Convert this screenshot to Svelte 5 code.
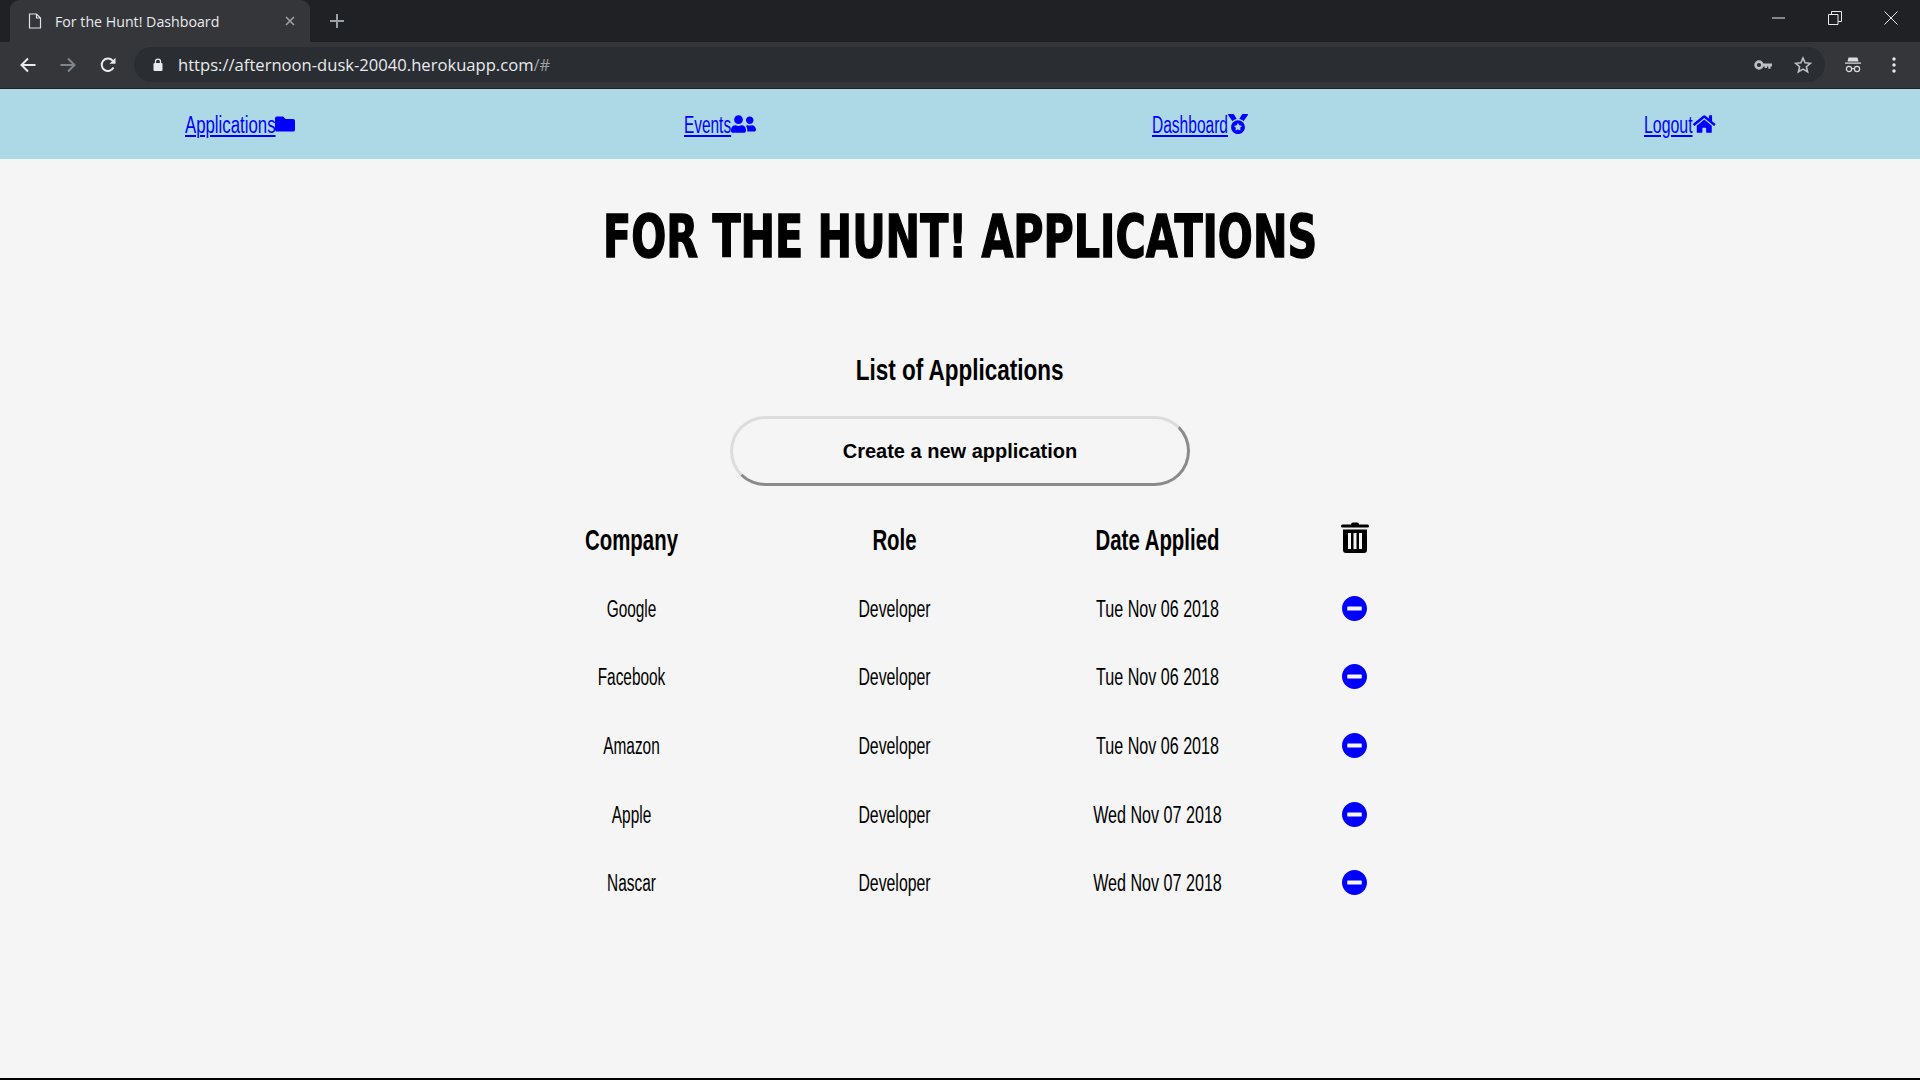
<script>
  const navLinks = [
    { label: 'Applications', icon: 'folder', width: 90, squeeze: 0.73 },
    { label: 'Events', icon: 'friends', width: 47, squeeze: 0.67 },
    { label: 'Dashboard', icon: 'medal', width: 76, squeeze: 0.675 },
    { label: 'Logout', icon: 'home', width: 49, squeeze: 0.69 }
  ];

  const applications = [
    { company: 'Google', role: 'Developer', date: 'Tue Nov 06 2018' },
    { company: 'Facebook', role: 'Developer', date: 'Tue Nov 06 2018' },
    { company: 'Amazon', role: 'Developer', date: 'Tue Nov 06 2018' },
    { company: 'Apple', role: 'Developer', date: 'Wed Nov 07 2018' },
    { company: 'Nascar', role: 'Developer', date: 'Wed Nov 07 2018' }
  ];

  const icons = {
    folder: { box: '0 0 512 512', d: 'M464 128H272l-64-64H48C21.49 64 0 85.49 0 112v288c0 26.51 21.49 48 48 48h416c26.51 0 48-21.49 48-48V176c0-26.51-21.49-48-48-48z' },
    friends: { box: '0 0 640 512', d: 'M192 256c61.9 0 112-50.1 112-112S253.9 32 192 32 80 82.1 80 144s50.1 112 112 112zm76.8 32h-8.3c-20.8 10-43.9 16-68.5 16s-47.6-6-68.5-16h-8.3C51.6 288 0 339.6 0 403.2V432c0 26.5 21.5 48 48 48h288c26.5 0 48-21.5 48-48v-28.8c0-63.6-51.6-115.2-115.2-115.2zM480 256c53 0 96-43 96-96s-43-96-96-96-96 43-96 96 43 96 96 96zm48 32h-3.8c-13.9 4.8-28.6 8-44.2 8s-30.3-3.2-44.2-8H432c-20.4 0-39.2 5.9-55.7 15.4 24.4 26.3 39.7 61.2 39.7 99.8v38.4c0 2.2-.5 4.3-.6 6.4H592c26.5 0 48-21.5 48-48 0-61.9-50.1-112-112-112z' },
    medal: { box: '0 0 512 512', d: 'M223.75 130.75L154.62 15.54A31.997 31.997 0 0 0 127.18 0H16.03C3.08 0-4.5 14.57 2.92 25.18l111.27 158.96c29.72-27.77 67.52-46.83 109.56-53.39zM495.97 0H384.82c-11.24 0-21.66 5.9-27.44 15.54l-69.13 115.21c42.04 6.56 79.84 25.62 109.56 53.38L509.08 25.18C516.5 14.57 508.92 0 495.97 0zM256 160c-97.2 0-176 78.8-176 176s78.8 176 176 176 176-78.8 176-176-78.8-176-176-176zm92.52 157.26l-37.93 36.96 8.97 52.22c1.6 9.36-8.26 16.51-16.65 12.09L256 393.88l-46.9 24.65c-8.4 4.45-18.25-2.74-16.65-12.09l8.97-52.22-37.93-36.96c-6.82-6.64-3.05-18.23 6.35-19.59l52.43-7.64 23.43-47.52c2.11-4.28 6.19-6.39 10.28-6.39 4.11 0 8.22 2.14 10.33 6.39l23.43 47.52 52.43 7.64c9.4 1.36 13.17 12.95 6.35 19.59z' },
    home: { box: '0 0 576 512', d: 'M280.37 148.26L96 300.11V464a16 16 0 0 0 16 16l112.06-.29a16 16 0 0 0 15.92-16V368a16 16 0 0 1 16-16h64a16 16 0 0 1 16 16v95.64a16 16 0 0 0 16 16.05L464 480a16 16 0 0 0 16-16V300L295.67 148.26a12.19 12.19 0 0 0-15.3 0zM571.6 251.47L488 182.56V44.05a12 12 0 0 0-12-12h-56a12 12 0 0 0-12 12v72.61L318.47 43a48 48 0 0 0-61 0L4.34 251.47a12 12 0 0 0-1.6 16.9l25.5 31A12 12 0 0 0 45.15 301l235.22-193.74a12.19 12.19 0 0 1 15.3 0L530.9 301a12 12 0 0 0 16.9-1.6l25.5-31a12 12 0 0 0-1.7-16.93z' }
  };
</script>

<div class="browser">
  <div class="tabstrip">
    <div class="tab">
      <svg class="favicon" viewBox="0 0 14 16" width="14" height="16">
        <path d="M1.5 1h7l4 4v10h-11zM8.5 1v4h4" fill="none" stroke="#dee1e6" stroke-width="1.2" />
      </svg>
      <span class="tab-title">For the Hunt! Dashboard</span>
      <svg class="tab-close" viewBox="0 0 10 10" width="10" height="10">
        <path d="M1 1l8 8M9 1l-8 8" stroke="#9aa0a6" stroke-width="1.6" />
      </svg>
    </div>
    <svg class="new-tab" viewBox="0 0 14 14" width="14" height="14">
      <path d="M7 0v14M0 7h14" stroke="#9aa0a6" stroke-width="2" />
    </svg>
    <div class="window-btns">
      <svg viewBox="0 0 14 14" width="14" height="14"><path d="M0 7h13" stroke="#e8eaed" stroke-width="1" /></svg>
      <svg viewBox="0 0 14 14" width="14" height="14"><path d="M.5 3.5h9.5v10H.5zM3.5 3.5V.5h10v10H10" fill="none" stroke="#e8eaed" stroke-width="1" /></svg>
      <svg viewBox="0 0 14 14" width="14" height="14"><path d="M.5.5l13 13M13.5.5l-13 13" stroke="#e8eaed" stroke-width="1" /></svg>
    </div>
  </div>

  <div class="toolbar">
    <svg class="tool" viewBox="0 0 16 16" width="16" height="16">
      <path d="M15.5 8H2M8 1.5L1.5 8 8 14.5" fill="none" stroke="#e8eaed" stroke-width="2" />
    </svg>
    <svg class="tool" viewBox="0 0 16 16" width="16" height="16">
      <path d="M.5 8H14M8 1.5L14.5 8 8 14.5" fill="none" stroke="#80868b" stroke-width="2" />
    </svg>
    <svg class="tool" viewBox="0 0 16 16" width="16" height="16">
      <path d="M13.5 10.5A6.2 6.2 0 1 1 12.6 3.6L14 5" fill="none" stroke="#e8eaed" stroke-width="2" />
      <path d="M15.5 .8v6h-6z" fill="#e8eaed" />
    </svg>
    <div class="omnibox">
      <svg class="lock" viewBox="0 0 10 13" width="10" height="13">
        <path d="M2.5 5.500V3.600a2.500 2.500 0 0 1 5 0v1.900" fill="none" stroke="#e8eaed" stroke-width="1.300" />
        <rect x="0.5" y="5" width="9" height="8" rx="1" fill="#e8eaed" />
      </svg>
      <span class="url">https://afternoon-dusk-20040.herokuapp.com<span class="url-dim">/#</span></span>
      <svg class="key" viewBox="0 0 18 10" width="18" height="10">
        <circle cx="5" cy="5" r="3.400" fill="none" stroke="#bdc1c6" stroke-width="2.600" />
        <path d="M8 3.600h10v2.800h-1.500v2.400h-2.200V6.400h-1.400v1.600h-2.200V6.400H8z" fill="#bdc1c6" />
      </svg>
      <svg class="star" viewBox="0 0 18 18" width="18" height="18">
        <path d="M9 2l2.100 4.800 5.200.5-3.900 3.400 1.200 5.100L9 13.100l-4.600 2.700 1.200-5.100-3.900-3.400 5.200-.5z" fill="none" stroke="#bdc1c6" stroke-width="1.600" />
      </svg>
    </div>
    <svg class="incognito" viewBox="0 0 18 18" width="18" height="18">
      <path d="M4.500 1.500h9l1 4h-11zM1 6.500h16v1.200H1z" fill="#dadce0" />
      <circle cx="5" cy="13" r="2.600" fill="none" stroke="#dadce0" stroke-width="1.200" />
      <circle cx="13" cy="13" r="2.600" fill="none" stroke="#dadce0" stroke-width="1.200" />
      <path d="M7.600 12.600h2.800" stroke="#dadce0" stroke-width="1.200" />
    </svg>
    <svg class="dots" viewBox="0 0 4 16" width="4" height="16">
      <circle cx="2" cy="2" r="1.700" fill="#e8eaed" />
      <circle cx="2" cy="8" r="1.700" fill="#e8eaed" />
      <circle cx="2" cy="14" r="1.700" fill="#e8eaed" />
    </svg>
  </div>
</div>

<nav class="nav">
  {#each navLinks as link}
    <div class="nav-item">
      <span class="nav-label" style="width: {link.width}px">
        <a href="#top" style="transform: scaleX({link.squeeze})">{link.label}</a>
      </span>
      <svg class="nav-icon" viewBox={icons[link.icon].box} fill="#0000ff">
        <path d={icons[link.icon].d} />
      </svg>
    </div>
  {/each}
</nav>

<main class="page">
  <h1 class="title">For the Hunt! Applications</h1>
  <h2 class="subtitle">List of Applications</h2>
  <button class="create-btn">Create a new application</button>

  <div class="table">
    <div class="head head-text">Company</div>
    <div class="head head-text">Role</div>
    <div class="head head-text">Date Applied</div>
    <div class="head trash-cell">
      <svg class="trash" viewBox="0 0 28 32" width="28" height="32">
        <path d="M10 3.500a2 2 0 0 1 2-2h4a2 2 0 0 1 2 2h8.500a1.500 1.500 0 0 1 0 3h-25a1.500 1.500 0 0 1 0-3z" />
        <path fill-rule="evenodd" d="M2 8.500h24V29a3 3 0 0 1-3 3H5a3 3 0 0 1-3-3zM7 12v16h3V12zM12.500 12v16h3V12zM18 12v16h3V12z" />
      </svg>
    </div>
    {#each applications as app}
      <div class="cell company">{app.company}</div>
      <div class="cell role">{app.role}</div>
      <div class="cell date">{app.date}</div>
      <div class="remove-cell">
        <svg class="remove" viewBox="8 8 496 496" width="25" height="25" fill="#0000ff">
          <path d="M256 8C119 8 8 119 8 256s111 248 248 248 248-111 248-248S393 8 256 8zM124 296c-6.600 0-12-5.400-12-12v-56c0-6.600 5.400-12 12-12h264c6.600 0 12 5.400 12 12v56c0 6.600-5.400 12-12 12H124z" />
        </svg>
      </div>
    {/each}
  </div>
</main>

<style>
  :global(body) {
    margin: 0;
    background: #f5f5f5;
  }

  .browser {
    background: #35363a;
    font-family: "Open Sans", "Noto Sans", sans-serif;
  }

  .tabstrip {
    height: 42px;
    background: #202124;
    display: flex;
    align-items: center;
  }

  .tab {
    width: 300px;
    height: 42px;
    margin-left: 10px;
    box-sizing: border-box;
    padding: 0 15px 0 18px;
    background: #35363a;
    border-radius: 9px 9px 0 0;
    display: flex;
    align-items: center;
    color: #e8eaed;
    font-size: 14.200px;
  }

  .favicon {
    margin-right: 13px;
  }

  .tab-title {
    flex: 1;
  }

  .new-tab {
    margin-left: 20px;
  }

  .window-btns {
    margin-left: auto;
    margin-right: 22px;
    margin-top: -6px;
    display: flex;
    gap: 42px;
  }

  .toolbar {
    height: 47px;
    box-sizing: border-box;
    padding: 5px 24px 6px 20px;
    display: flex;
    align-items: center;
    border-bottom: 1px solid #202124;
  }

  .tool {
    margin-right: 24px;
  }

  .omnibox {
    flex: 1;
    height: 35px;
    margin-left: -6px;
    margin-right: 19px;
    padding: 0 13px 0 19px;
    background: #2a2d31;
    border-radius: 18px;
    display: flex;
    align-items: center;
  }

  .url {
    margin-left: 15px;
    color: #e8eaed;
    font-size: 16.600px;
    flex: 1;
  }

  .url-dim {
    color: #9aa0a6;
  }

  .star {
    margin-left: 22px;
  }

  .dots {
    margin-left: 30px;
  }

  .nav {
    height: 70px;
    background: #add8e6;
    display: grid;
    grid-template-columns: repeat(4, 1fr);
    align-items: center;
    font-family: "Liberation Sans", sans-serif;
  }

  .nav-item {
    display: flex;
    justify-content: center;
    align-items: center;
    font-size: 23px;
  }

  .nav-label {
    display: block;
    white-space: nowrap;
    padding-top: 2px;
  }

  .nav-item a {
    display: inline-block;
    color: #0000ff;
    transform-origin: left center;
  }

  .nav-icon {
    height: 20px;
    width: auto;
  }

  .page {
    min-height: 921px;
    box-sizing: border-box;
    border-bottom: 2px solid #000;
    font-family: "Liberation Sans", sans-serif;
    color: #000;
    display: flex;
    flex-direction: column;
    align-items: center;
    overflow: hidden;
  }

  .title {
    margin: 45px 0 0;
    font-family: "DejaVu Sans", sans-serif;
    font-size: 58px;
    line-height: 66px;
    font-weight: 700;
    text-transform: uppercase;
    white-space: nowrap;
    -webkit-text-stroke: 1.500px #000;
    transform: scaleX(0.711);
  }

  .subtitle {
    margin: 80px 0 0;
    font-size: 30px;
    line-height: 40px;
    font-weight: 700;
    transform: scaleX(0.75);
  }

  .create-btn {
    width: 460px;
    height: 70px;
    margin-top: 26px;
    background: #f5f5f5;
    border: 3px solid;
    border-color: #dcdcdc #8a8a8a #8a8a8a #dcdcdc;
    border-radius: 35px;
    color: #000;
    font-family: "Liberation Sans", sans-serif;
    font-size: 20px;
    font-weight: 700;
  }

  .table {
    width: 920px;
    margin-top: 20px;
    display: grid;
    grid-template-columns: 263px 263px 263px 131px;
    grid-auto-rows: 68.700px;
    align-items: center;
    text-align: center;
  }

  .head {
    font-size: 30px;
    font-weight: 700;
  }

  .head-text {
    transform: scaleX(0.68);
  }

  .trash-cell {
    margin-bottom: 6px;
  }

  .cell {
    font-size: 23px;
  }

  .company {
    transform: scaleX(0.67);
  }

  .role {
    transform: scaleX(0.688);
  }

  .date {
    transform: scaleX(0.7);
  }

  .remove-cell {
    margin-bottom: 2px;
  }

  .trash,
  .remove {
    display: block;
    margin: 0 auto;
  }
</style>
